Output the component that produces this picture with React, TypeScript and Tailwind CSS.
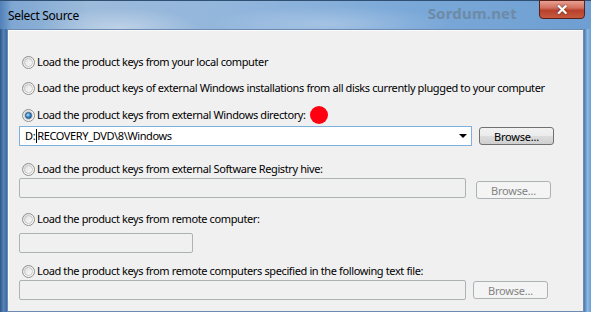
import React from "react";

const font = { fontFamily: '"Noto Sans", "Open Sans", sans-serif' };

function Radio({ checked }: { checked?: boolean }) {
  return (
    <span className="relative inline-flex h-[13px] w-[13px] shrink-0 items-center justify-center rounded-full border border-[#8f8f8f] bg-gradient-to-br from-[#dcdcdc] via-[#f4f4f4] to-[#ffffff]">
      <span className="absolute inset-[1px] rounded-full border border-[#c6c6c6] bg-gradient-to-br from-[#e2e2e2] to-[#fafafa]" />
      {checked && (
        <span className="relative h-[7px] w-[7px] rounded-full border border-[#1b4a7a] bg-[radial-gradient(circle_at_35%_35%,#a9e1ff,#2a80c4_60%,#104c86)]" />
      )}
    </span>
  );
}

function RadioRow({ label, checked, mt, dot }: { label: string; checked?: boolean; mt: string; dot?: boolean }) {
  return (
    <div className={`flex h-[16px] items-center pl-[13px] ${mt}`}>
      <Radio checked={checked} />
      <span className="ml-[2px] whitespace-nowrap text-[11px] leading-[16px] tracking-[-0.38px] text-black">{label}</span>
      {dot && <span className="ml-[4px] h-[18px] w-[18px] rounded-full bg-[#ff0010]" />}
    </div>
  );
}

function BrowseButton({ disabled, className }: { disabled?: boolean; className: string }) {
  return (
    <div
      className={`flex h-[18px] w-[75px] items-center justify-center rounded-[3px] border text-[11px] leading-none tracking-[-0.2px] ${
        disabled
          ? "border-[#adb2b5] bg-[#f4f4f4] text-[#838383]"
          : "border-[#707070] bg-[linear-gradient(#f2f2f2,#ebebeb_50%,#dddddd_50%,#cfcfcf)] text-black"
      } ${className}`}
    >
      Browse...
    </div>
  );
}

export default function App() {
  return (
    <div
      className="relative flex h-[312px] w-[591px] flex-col overflow-hidden bg-[linear-gradient(90deg,#4f80b8_0%,#7fa7d2_2%,#9dbbdb_15%,#8fb4dc_45%,#7aa8d8_70%,#6f9fd2_100%)]"
      style={font}
    >
      {/* title bar */}
      <div className="relative flex h-[29px] shrink-0 items-center">
        <div className="absolute inset-0 bg-[radial-gradient(ellipse_80px_20px_at_120px_28px,rgba(255,255,255,0.35),transparent),radial-gradient(ellipse_120px_18px_at_330px_24px,rgba(255,255,255,0.25),transparent)]" />
        <div className="absolute left-0 right-0 top-0 h-[1px] bg-[#2f4f73]" />
        <span className="relative ml-[8px] mt-[2px] text-[12px] tracking-[-0.3px] text-black">Select Source</span>
        <span className="relative ml-auto mr-[22px] mt-[-2px] text-[15px] font-bold tracking-[0.2px] text-[#6d8aa6]">
          Sordum.net
        </span>
        <div className="relative mr-[6px] mt-[-11px] flex h-[19px] w-[46px] items-center justify-center rounded-b-[4px] border border-[#5a1f17] bg-[linear-gradient(#e8a093,#d2705f_40%,#b8402c_55%,#c55a3f)]">
          <span className="text-[15px] font-bold leading-none text-white [text-shadow:0_0_2px_#3a1a10]">✕</span>
        </div>
      </div>
      {/* body */}
      <div className="flex flex-1">
        <div className="w-[7px] shrink-0 bg-[linear-gradient(90deg,#2d5586,#5582b8_50%,#3c6aa2)]" />
        <div className="flex-1 border border-[#6d8bb0] bg-[#f0f0f0]">
          <div className="border-l border-t border-white/70 pt-[23px]">
            <RadioRow mt="" label="Load the product keys from your local computer" />
            <RadioRow
              mt="mt-[10px]"
              label="Load the product keys of external Windows installations from all disks currently plugged to your computer"
            />
            <RadioRow mt="mt-[11px]" checked dot label="Load the product keys from external Windows directory:" />
            <div className="mt-[3px] flex items-start pl-[10px]">
              <div className="relative flex h-[20px] w-[453px] items-center border border-[#7eb0de] bg-white pl-[5px] text-[11px] tracking-[-0.38px] text-black">
                <span>D:</span>
                <span className="mx-[0.5px] h-[14px] w-[1px] bg-black" />
                <span>RECOVERY_DVD\8\Windows</span>
                <svg className="absolute right-[4px] top-[7px]" width="8" height="4" viewBox="0 0 8 4">
                  <path d="M0 0H8L4 4Z" fill="#000" />
                </svg>
              </div>
              <BrowseButton className="ml-[7px] mt-[1px]" />
            </div>
            <RadioRow mt="mt-[15px]" label="Load the product keys from external Software Registry hive:" />
            <div className="mt-[1px] flex items-start pl-[10px]">
              <div className="h-[20px] w-[447px] rounded-[2px] border border-[#adb2b5] bg-[#f0f0f0]" />
              <BrowseButton disabled className="ml-[10px] mt-[3px]" />
            </div>
            <RadioRow mt="mt-[12px]" label="Load the product keys from remote computer:" />
            <div className="mt-[6px] flex pl-[10px]">
              <div className="h-[20px] w-[174px] rounded-[2px] border border-[#adb2b5] bg-[#f0f0f0]" />
            </div>
            <RadioRow mt="mt-[10px]" label="Load the product keys from remote computers specified in the following text file:" />
            <div className="mt-[1px] flex items-start pl-[10px]">
              <div className="h-[20px] w-[447px] rounded-[2px] border border-[#adb2b5] bg-[#f0f0f0]" />
              <BrowseButton disabled className="ml-[7px] mt-[1px]" />
            </div>
          </div>
        </div>
        <div className="w-[7px] shrink-0 bg-[linear-gradient(90deg,#4b77a8,#8bb8e6_50%,#6c9ed4)]" />
      </div>
    </div>
  );
}
